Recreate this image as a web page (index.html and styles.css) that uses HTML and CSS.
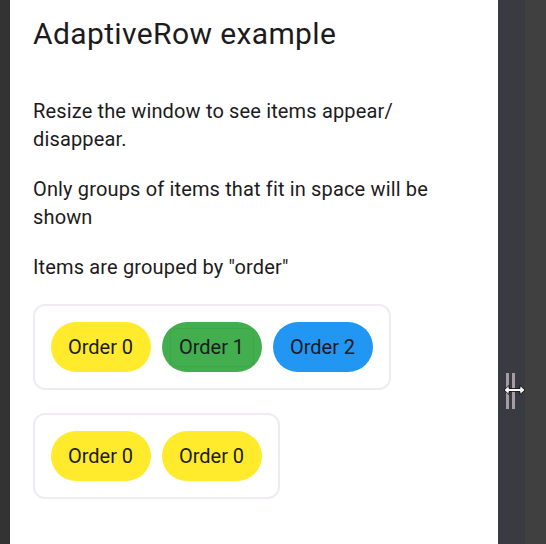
FILE: index.html
```html
<!DOCTYPE html>
<html lang="en">
<head>
<meta charset="utf-8">
<title>AdaptiveRow example</title>
<link rel="stylesheet" href="styles.css">
</head>
<body>
<div class="frame">
  <main class="panel">
    <h1 class="title">AdaptiveRow example</h1>
    <p class="text first">Resize the window to see items appear/<br>disappear.</p>
    <p class="text">Only groups of items that fit in space will be<br>shown</p>
    <p class="text last">Items are grouped by "order"</p>
    <section class="card">
      <div class="pill yellow">Order 0</div>
      <div class="pill green">Order 1</div>
      <div class="pill blue">Order 2</div>
    </section>
    <section class="card">
      <div class="pill yellow">Order 0</div>
      <div class="pill yellow">Order 0</div>
    </section>
  </main>
  <aside class="gutter">
    <div class="handle">
      <span class="bar"></span>
      <span class="bar"></span>
      <svg class="cursor" width="23" height="12" viewBox="0 0 23 12" aria-hidden="true">
        <path d="M1 6 L6 1.5 V4.5 H17 V1.5 L22 6 L17 10.5 V7.5 H6 V10.5 Z" fill="#fff" stroke="#000" stroke-width="0.8"/>
      </svg>
    </div>
  </aside>
</div>
</body>
</html>
```
FILE: styles.css
```css
* { box-sizing: border-box; }
html, body { margin: 0; height: 100%; overflow: hidden; }
body { font-family: Roboto, "Liberation Sans", sans-serif; color: #1d1b20; background: #333; }
.frame { display: flex; height: 544px; padding-left: 10px; }
.panel { width: 488px; background: #fff; padding: 14px 0 0 23px; }
.title { margin: 0 0 43px; font-size: 30px; font-weight: 400; line-height: 40px; letter-spacing: 0.38px; }
.text { margin: 0 0 22px; font-size: 20px; line-height: 28px; letter-spacing: 0.15px; }
.last { margin-bottom: 23px; }
.card {
  display: flex;
  width: fit-content;
  gap: 11px;
  padding: 16px 16.5px 16px 15.5px;
  border: 2px solid #f0ebf3;
  border-radius: 12px;
  margin-bottom: 23px;
  background: #fff;
}
.pill {
  position: relative;
  width: 100px;
  height: 50px;
  border-radius: 25px;
  display: flex;
  align-items: center;
  justify-content: center;
  font-size: 20px;
  line-height: 28px;
}
.yellow { background: #ffeb2b; }
.green { background: #43ae4e; }
.green::before {
  content: "";
  position: absolute;
  inset: 6px 8px 5px;
  border: 1px solid rgba(30, 110, 45, 0.12);
  border-radius: 6px;
}
.blue { background: #2196f3; }
.gutter {
  flex: 1;
  background: linear-gradient(to right, #3a3a42 0 27px, #404040 27px);
  display: flex;
  align-items: flex-start;
}
.handle { display: flex; gap: 3px; margin: 373px 0 0 8px; position: relative; }
.bar { width: 3px; height: 36px; background: #a59ca6; }
.cursor { position: absolute; left: -3px; top: 11px; }
```
